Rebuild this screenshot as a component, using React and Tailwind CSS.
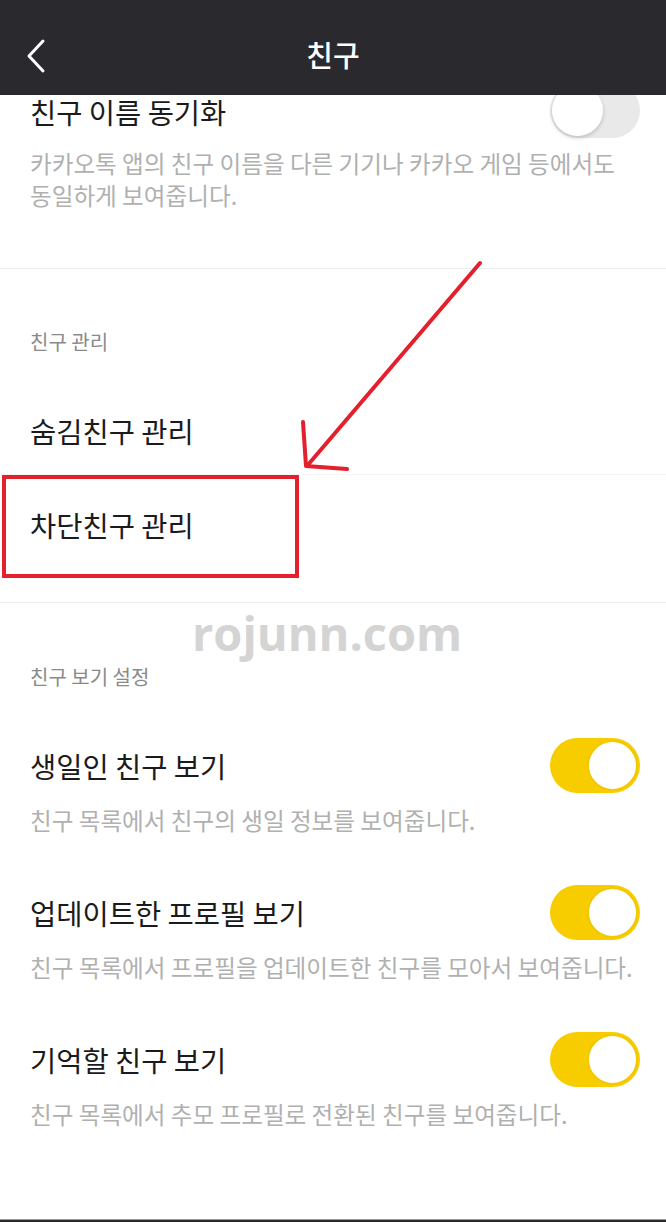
import React from "react";

const font = { fontFamily: '"Noto Sans CJK KR", "Noto Sans", sans-serif' };

function Toggle({ on }) {
  if (on) {
    return (
      <div className="relative h-[55px] w-[90px] shrink-0 rounded-full bg-[#f8cd00]">
        <div className="absolute right-[2px] top-[2px] h-[51px] w-[51px] rounded-full border-[2px] border-[#f3c600] bg-white" />
      </div>
    );
  }
  return (
    <div className="relative h-[55px] w-[90px] shrink-0 rounded-full bg-[#e9e9ea]">
      <div className="absolute left-[2px] top-[2px] h-[51px] w-[51px] rounded-full bg-white shadow-[0_2px_4px_rgba(0,0,0,0.18)]" />
    </div>
  );
}

function ToggleItem({ title, desc, on, last }) {
  return (
    <div className={last ? "" : "pb-[49px]"}>
      <div className="flex h-[55px] items-center justify-between pl-[30px] pr-[26px]">
        <span className="text-[28.5px] leading-[34px] text-[#1b1b1b]">{title}</span>
        <Toggle on={on} />
      </div>
      <p className="mt-[11px] whitespace-nowrap pl-[30px] text-[23.6px] leading-[32px] text-[#b0b0b0]">{desc}</p>
    </div>
  );
}

export default function App() {
  return (
    <div className="relative flex h-[1222px] w-[666px] flex-col overflow-hidden bg-white" style={font}>
      {/* header */}
      <div className="relative z-10 flex h-[95px] shrink-0 items-center justify-center bg-[#2a2a2e] pt-[14px]">
        <svg className="absolute left-[24px] top-[38px]" width="24" height="36" viewBox="0 0 24 36">
          <path d="M19 3 L5 18 L19 33" fill="none" stroke="white" strokeWidth="3" strokeLinecap="round" strokeLinejoin="round" />
        </svg>
        <span className="text-[29px] font-medium leading-none text-white">친구</span>
      </div>

      {/* content */}
      <div className="flex-1 overflow-hidden">
        <div className="-mt-[12px]">
          {/* section 1 */}
          <div className="pb-[57px]">
            <div className="flex h-[55px] items-center justify-between pl-[30px] pr-[26px]">
              <span className="pt-[3px] text-[28.5px] leading-[28px] text-[#1b1b1b]">친구 이름 동기화</span>
              <Toggle on={false} />
            </div>
            <p className="mt-[9px] whitespace-nowrap pl-[30px] text-[23.6px] leading-[32px] text-[#b0b0b0]">
              카카오톡 앱의 친구 이름을 다른 기기나 카카오 게임 등에서도
              <br />
              동일하게 보여줍니다.
            </p>
          </div>
          <div className="h-px bg-[#ececec]" />

          {/* section 2 */}
          <div className="pt-[59px]">
            <div className="pl-[30px] text-[20px] leading-[28px] text-[#8a8a8a]">친구 관리</div>
            <div className="mt-[31px] flex h-[88px] items-center border-b border-[#f4f4f4] pl-[30px]">
              <span className="text-[28.5px] leading-[34px] text-[#1b1b1b]">숨김친구 관리</span>
            </div>
            <div className="relative flex h-[100px] items-center pl-[30px]">
              <span className="text-[28.5px] leading-[34px] text-[#1b1b1b]">차단친구 관리</span>
              <div className="absolute left-[2px] top-0 h-[103px] w-[297px] border-[4px] border-[#e4202c]" />
            </div>
          </div>
          <div className="mt-[27px] h-px bg-[#ececec]" />

          {/* section 3 */}
          <div className="relative pt-[60px]">
            <div className="absolute left-[192px] top-[2px] text-[47px] font-bold leading-[56px] text-[#d4d4d4]" style={{ fontFamily: '"Open Sans", sans-serif' }}>
              rojunn.com
            </div>
            <div className="pl-[30px] text-[20px] leading-[28px] text-[#8a8a8a]">친구 보기 설정</div>
            <div className="mt-[47px]">
              <ToggleItem on title="생일인 친구 보기" desc="친구 목록에서 친구의 생일 정보를 보여줍니다." />
              <ToggleItem on title="업데이트한 프로필 보기" desc="친구 목록에서 프로필을 업데이트한 친구를 모아서 보여줍니다." />
              <ToggleItem on last title="기억할 친구 보기" desc="친구 목록에서 추모 프로필로 전환된 친구를 보여줍니다." />
            </div>
          </div>
        </div>
      </div>

      <div className="h-[3px] shrink-0 border-t border-[#9a9a9a] bg-[#2a2a2a]" />

      {/* annotation arrow */}
      <svg className="pointer-events-none absolute left-0 top-0 z-20" width="666" height="1222" viewBox="0 0 666 1222">
        <g fill="none" stroke="#e4202c" strokeWidth="4" strokeLinecap="round" strokeLinejoin="round">
          <path d="M480 263 L307 466" />
          <path d="M303 422 L306 466 L347 469" />
        </g>
      </svg>
    </div>
  );
}
